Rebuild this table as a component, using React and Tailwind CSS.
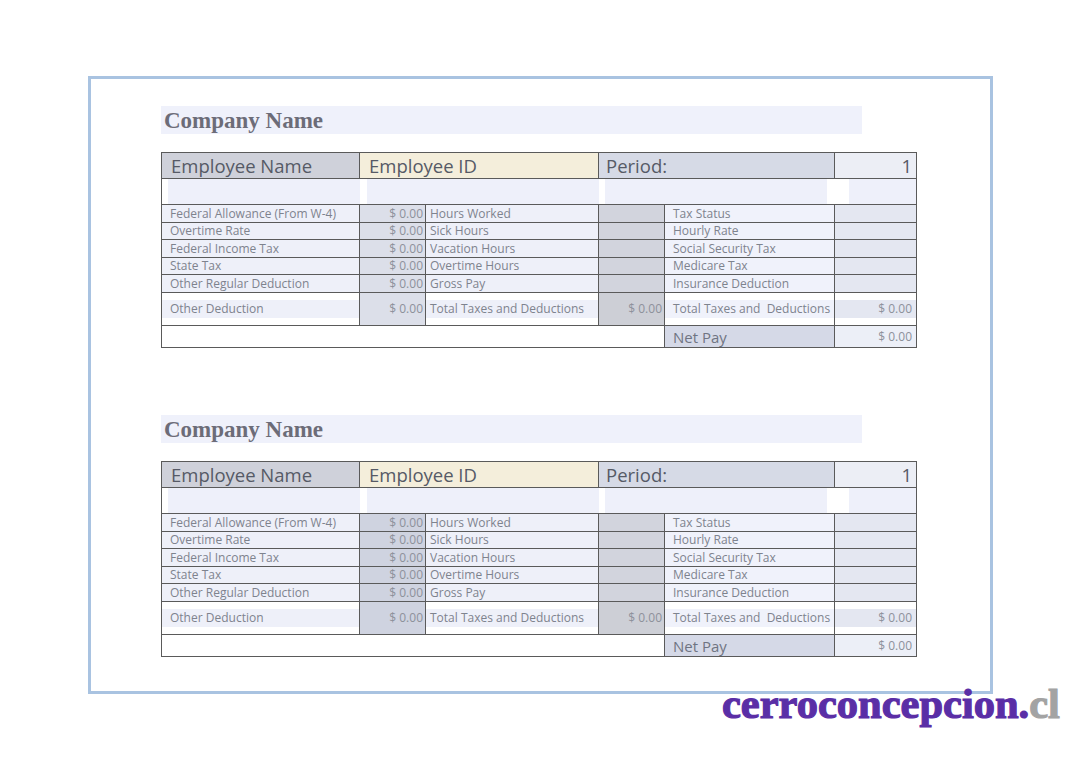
import React from "react";

const rows = [
  { h: "h-[18px]", l: "Federal Allowance (From W-4)", m: "Hours Worked", r: "Tax Status" },
  { h: "h-[17px]", l: "Overtime Rate", m: "Sick Hours", r: "Hourly Rate" },
  { h: "h-[18px]", l: "Federal Income Tax", m: "Vacation Hours", r: "Social Security Tax" },
  { h: "h-[17px]", l: "State Tax", m: "Overtime Hours", r: "Medicare Tax" },
  { h: "h-[18px]", l: "Other Regular Deduction", m: "Gross Pay", r: "Insurance Deduction" },
];

const B = "border-[#5a5a5a]";

function Table({ dark }) {
  const valBg = dark ? "bg-[#cfd3e0]" : "bg-[#dcdfe9]";
  return (
    <div className={`w-[756px] border ${B} font-['Open_Sans',sans-serif] text-[#7e838e]`}>
      {/* header */}
      <div className={`flex h-[26px] border-b ${B} text-[18.5px] leading-none text-[#565a66]`}>
        <div className={`w-[198px] border-r ${B} bg-[#cfd1da] flex items-center pl-[9px] pt-[2px]`}>Employee Name</div>
        <div className={`w-[239px] border-r ${B} bg-[#f4eedb] flex items-center pl-[9px] pt-[2px]`}>Employee ID</div>
        <div className={`w-[236px] border-r ${B} bg-[#d6dae6] flex items-center pl-[7px] pt-[2px]`}>Period:</div>
        <div className="w-[81px] bg-[#eceef5] flex items-center justify-end pr-[4px] pt-[2px]">1</div>
      </div>
      {/* empty row */}
      <div className={`flex h-[26px] border-b ${B} bg-[#eef0fa]`}>
        <div className="w-[198px] border-l-[6px] border-white" />
        <div className="w-[239px] border-l-[7px] border-white" />
        <div className="w-[228px] border-l-[6px] border-white" />
        <div className="w-[22px] bg-white" />
        <div className="flex-1" />
      </div>
      {rows.map((r, i) => (
        <div key={i} className={`flex ${r.h} border-b ${B} text-[12px] leading-none`}>
          <div className={`w-[198px] border-r ${B} bg-[#eef0f9] flex items-center pl-[8px]`}>{r.l}</div>
          <div className={`w-[66px] border-r ${B} ${valBg} flex items-center justify-end pr-[2px] text-[#8d919b]`}>$ 0.00</div>
          <div className={`w-[173px] border-r ${B} bg-[#eef0f9] flex items-center pl-[4px]`}>{r.m}</div>
          <div className={`w-[66px] border-r ${B} bg-[#d2d4dd]`} />
          <div className={`w-[170px] border-r ${B} bg-[#f0f2fb] flex items-center pl-[8px]`}>{r.r}</div>
          <div className="w-[81px] bg-[#e4e7f1]" />
        </div>
      ))}
      {/* other deduction row */}
      <div className={`flex h-[33px] border-b ${B} text-[12px] leading-none`}>
        <div className={`w-[198px] border-r ${B} bg-white flex items-center`}>
          <div className="w-full h-[18px] bg-[#eef0f9] flex items-center pl-[8px]">Other Deduction</div>
        </div>
        <div className={`w-[66px] border-r ${B} ${valBg} flex items-center justify-end pr-[2px] text-[#8d919b]`}>$ 0.00</div>
        <div className={`w-[173px] border-r ${B} bg-white flex items-center`}>
          <div className="w-full h-[18px] bg-[#eef0f9] flex items-center pl-[4px]">Total Taxes and Deductions</div>
        </div>
        <div className={`w-[66px] border-r ${B} bg-[#cdcfd6] flex items-center justify-end pr-[2px] text-[#8d919b]`}>$ 0.00</div>
        <div className={`w-[170px] border-r ${B} bg-white flex items-center`}>
          <div className="w-full h-[18px] bg-[#f0f2fb] flex items-center pl-[8px] whitespace-pre">Total Taxes and  Deductions</div>
        </div>
        <div className="w-[81px] bg-white flex items-center">
          <div className="w-full h-[18px] bg-[#e4e7f1] flex items-center justify-end pr-[4px] text-[#8d919b]">$ 0.00</div>
        </div>
      </div>
      {/* net pay row */}
      <div className="flex h-[21px] leading-none">
        <div className={`w-[503px] border-r ${B} bg-white`} />
        <div className={`w-[170px] border-r ${B} bg-[#d5d9e7] flex items-center pl-[8px] text-[15px] text-[#6f7482]`}>
          <span className="translate-y-[1px]">Net Pay</span>
        </div>
        <div className="w-[81px] bg-[#eceff7] flex items-center justify-end pr-[4px] text-[12px] text-[#8d919b]">$ 0.00</div>
      </div>
    </div>
  );
}

function Section({ dark }) {
  return (
    <div className="flex flex-col">
      <div className="w-[701px] h-[28px] bg-[#eff1fb] flex items-center pl-[3px]">
        <span className="font-['Liberation_Serif',serif] font-bold text-[23px] leading-none text-[#6c6c78]">Company Name</span>
      </div>
      <div className="mt-[18px]">
        <Table dark={dark} />
      </div>
    </div>
  );
}

export default function App() {
  return (
    <div className="relative w-[1085px] h-[757px] bg-white overflow-hidden">
      <div className="pt-[76px] pl-[88px]">
        <div className="w-[905px] h-[618px] border-[3px] border-[#a9c3e1] pl-[70px] pt-[27px] flex flex-col">
          <Section />
          <div className="mt-[67px]">
            <Section dark />
          </div>
        </div>
      </div>
      <div className="absolute left-[722px] top-[683px] font-['Liberation_Serif',serif] font-bold text-[42.5px] leading-none [-webkit-text-stroke:1.2px_currentColor]">
        <span className="text-[#5a2ea6]">cerroconcepcion.</span>
        <span className="text-[#a3a3a3]">cl</span>
      </div>
    </div>
  );
}
